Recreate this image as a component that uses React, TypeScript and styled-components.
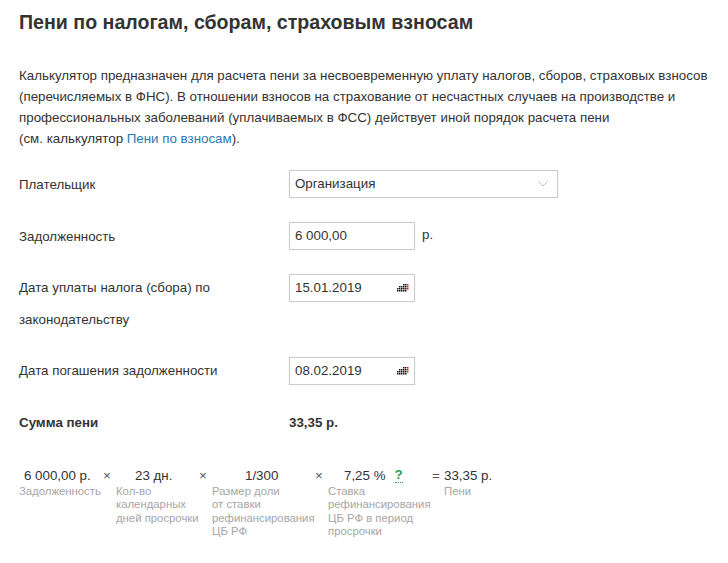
import React from "react";
import styled, { createGlobalStyle } from "styled-components";

const Global = createGlobalStyle`
  html, body { margin: 0; padding: 0; background: #fff; }
  body { font-family: "Liberation Sans", Arial, sans-serif; color: #333; }
`;
const Page = styled.div`
  width: 728px; height: 563px; box-sizing: border-box; padding: 11px 0 0 19px; overflow: hidden;
`;
const Title = styled.h1`
  margin: 0; font-size: 19.6px; line-height: 22px; font-weight: 700; color: #333; white-space: nowrap;
`;
const Intro = styled.p`
  margin: 33px 0 0; font-size: 13.33px; line-height: 20.9px; color: #333; white-space: nowrap;
`;
const Link = styled.a`
  color: #2a7ab5; text-decoration: none;
`;
const Row = styled.div<{ $top: number; $h?: number }>`
  display: grid; grid-template-columns: 270px 1fr; align-items: start;
  margin-top: ${p => p.$top}px;
  min-height: ${p => p.$h ?? 28}px;
`;
const Label = styled.div<{ $shift?: number }>`
  font-size: 13.33px; line-height: 32px; margin-top: ${p => -2 + (p.$shift ?? 0)}px; margin-bottom: -4px; color: #333; width: 230px;
`;
const Field = styled.div<{ $w: number }>`
  box-sizing: border-box; width: ${p => p.$w}px; height: 28px; border: 1px solid #ccc;
  box-shadow: 0 0 1px rgba(0,0,0,.12);
  display: flex; align-items: center; justify-content: space-between;
  padding: 0 5px 0 5px; font-size: 13.33px; color: #333; background: #fff;
`;
const Control = styled.div`
  display: flex; align-items: center; gap: 7px;
`;
const Unit = styled.span`
  font-size: 13.33px; color: #333; margin-top: -3px;
`;
const Sum = styled.div`
  display: grid; grid-template-columns: 270px 1fr; margin-top: 28px;
  font-size: 13.33px; font-weight: 700; line-height: 20px; color: #333;
`;
const Calc = styled.div`
  display: flex; margin-top: 34px; align-items: flex-start;
`;
const Col = styled.div<{ $w: number }>`
  width: ${p => p.$w}px; flex: none;
`;
const Val = styled.div<{ $pl?: number }>`
  font-size: 13.33px; line-height: 17px; color: #333; white-space: nowrap;
  padding-left: ${p => p.$pl ?? 0}px;
  display: flex; align-items: center;
`;
const Cap = styled.div`
  font-size: 11.33px; line-height: 13.6px; color: #a6a6a6; margin-top: 1px; white-space: nowrap;
`;
const Op = styled.div<{ $w: number }>`
  width: ${p => p.$w}px; flex: none; font-size: 13.33px; line-height: 17px; color: #555; white-space: nowrap;
`;
const Q = styled.span`
  margin-left: 9px; font-weight: 700; color: #2e9e4f; font-size: 13.33px; line-height: 14px;
  border-bottom: 1px dotted #2e9e4f;
`;
const Chev = styled.svg`
  margin-right: 4px;
`;

const Chevron = () => (
  <Chev width="10" height="6" viewBox="0 0 10 6" fill="none" stroke="#bdbdbd" strokeWidth="1"><path d="M.5.5 5 5 9.5.5" /></Chev>
);
const CalIcon = () => {
  const dots: React.ReactElement[] = [];
  const rows = [[6, 8, 10], [2, 4, 6, 8, 10], [0, 2, 4, 6, 8, 10], [0, 2, 4, 6, 8]];
  rows.forEach((r, y) => r.forEach(x => {
    dots.push(<rect key={`${x}-${y}`} x={x} y={y * 2} width="1.5" height="1.5" fill={x === 10 ? "#e02020" : "#111"} />);
  }));
  return <svg width="12" height="8" viewBox="0 0 12 8">{dots}</svg>;
};

export default function App() {
  return (
    <Page>
      <Global />
      <Title>Пени по налогам, сборам, страховым взносам</Title>
      <Intro>
        Калькулятор предназначен для расчета пени за несвоевременную уплату налогов, сборов, страховых взносов<br />
        (перечисляемых в ФНС). В отношении взносов на страхование от несчастных случаев на производстве и<br />
        профессиональных заболеваний (уплачиваемых в ФСС) действует иной порядок расчета пени<br />
        (см. калькулятор <Link>Пени по взносам</Link>).
      </Intro>
      <Row $top={20}>
        <Label $shift={1}>Плательщик</Label>
        <Field $w={269}>Организация<Chevron /></Field>
      </Row>
      <Row $top={24}>
        <Label $shift={1}>Задолженность</Label>
        <Control><Field $w={126}>6 000,00</Field><Unit>р.</Unit></Control>
      </Row>
      <Row $top={24} $h={59}>
        <Label>Дата уплаты налога (сбора) по законодательству</Label>
        <Field $w={126}>15.01.2019<CalIcon /></Field>
      </Row>
      <Row $top={24}>
        <Label>Дата погашения задолженности</Label>
        <Field $w={126}>08.02.2019<CalIcon /></Field>
      </Row>
      <Sum><span>Сумма пени</span><span>33,35 р.</span></Sum>
      <Calc>
        <Col $w={84}><Val $pl={5}>6 000,00 р.</Val><Cap>Задолженность</Cap></Col>
        <Op $w={13}>×</Op>
        <Col $w={83}><Val $pl={19}>23 дн.</Val><Cap>Кол-во<br />календарных<br />дней просрочки</Cap></Col>
        <Op $w={13}>×</Op>
        <Col $w={103}><Val $pl={33}>1/300</Val><Cap>Размер доли<br />от ставки<br />рефинансирования<br />ЦБ РФ</Cap></Col>
        <Op $w={13}>×</Op>
        <Col $w={104}><Val $pl={16}>7,25 %<Q>?</Q></Val><Cap>Ставка<br />рефинансирования<br />ЦБ РФ в период<br />просрочки</Cap></Col>
        <Op $w={12}>=</Op>
        <Col $w={60}><Val>33,35 р.</Val><Cap>Пени</Cap></Col>
      </Calc>
    </Page>
  );
}
